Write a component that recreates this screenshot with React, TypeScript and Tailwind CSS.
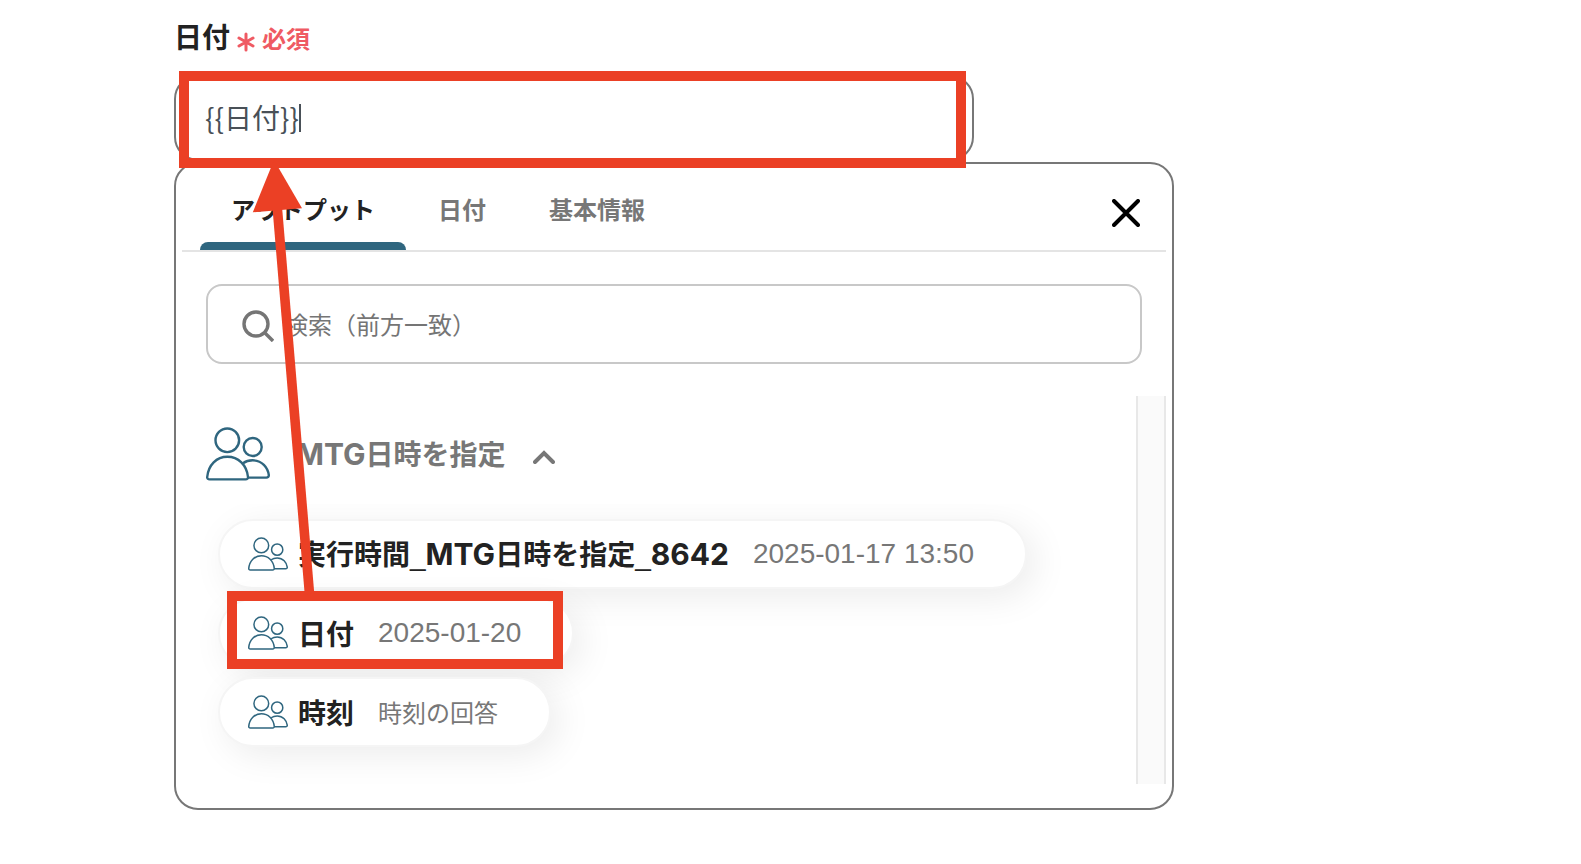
import { useState } from "react";

const TABS = ["アウトプット", "日付", "基本情報"];

const OUTPUTS = [
  {
    id: "run-time",
    label: (
      <>
        実行時間<Underscore />
        <Latin>MTG</Latin>日時を指定<Underscore />
        <Latin>8642</Latin>
      </>
    ),
    value: <Digits>2025-01-17 13:50</Digits>,
  },
  { id: "date", label: "日付", value: <Digits>2025-01-20</Digits> },
  { id: "time", label: "時刻", value: "時刻の回答" },
];

function Latin({ children }: { children: React.ReactNode }) {
  return (
    <span className="font-['Inter','Noto_Sans_CJK_JP',sans-serif] text-[30px] leading-none">
      {children}
    </span>
  );
}

function Underscore() {
  return <span className="font-['Liberation_Sans',sans-serif] font-normal">_</span>;
}

function Digits({ children }: { children: React.ReactNode }) {
  return (
    <span className="font-['Liberation_Sans',sans-serif] text-[28px] leading-none">{children}</span>
  );
}

function PeopleIcon({ className }: { className?: string }) {
  return (
    <svg
      viewBox="0 0 64 54"
      fill="none"
      stroke="#2f667f"
      strokeWidth="2.4"
      strokeLinejoin="round"
      className={className}
      aria-hidden="true"
    >
      <circle cx="21.3" cy="13.3" r="11.8" />
      <circle cx="46.7" cy="20" r="9" />
      <path d="M3.6 52.4C2 52.4 1.1 51.4 1.2 50 2.4 38 10.5 29.8 21.4 29.8S40.8 38 42 50c.1 1.4-.8 2.4-2.4 2.4Z" />
      <path d="M37 36.2C40 34 43.5 33.3 46.7 33.3 56 33.3 61.800 40.5 62.800 48c.1 1.5-.9 2.6-2.4 2.6H42" />
    </svg>
  );
}

function SearchIcon() {
  return (
    <svg viewBox="0 0 32 32" fill="none" stroke="#757575" strokeWidth="3.4" className="mt-[3px] size-8 shrink-0" aria-hidden="true">
      <circle cx="14" cy="14" r="12" />
      <path d="M22.5 22.5 31 31" />
    </svg>
  );
}

function Annotations() {
  return (
    <div className="pointer-events-none absolute inset-0" aria-hidden="true">
      <div className="absolute top-[71px] left-[179px] h-[97px] w-[787px] border-10 border-[#eb4025]" />
      <div className="absolute top-[591px] left-[227px] h-[78px] w-[336px] border-10 border-[#eb4025]" />
      <svg className="absolute top-0 left-0 h-[600px] w-[400px]" viewBox="0 0 400 600">
        <path d="M277.3 208 309.5 594" stroke="#eb4025" strokeWidth="9.6" />
        <path d="M274 160 302 208.3 252.8 212.3Z" fill="#eb4025" />
      </svg>
    </div>
  );
}

export default function App() {
  const [value, setValue] = useState("{{日付}}");
  const [search, setSearch] = useState("");
  const [activeTab, setActiveTab] = useState(0);
  const [open, setOpen] = useState(true);

  return (
    <main className="relative min-h-screen bg-white pt-3.5 pr-8 pl-[174px] font-['Noto_Sans_CJK_JP',sans-serif] text-[#222]">
      <div className="flex h-11 items-center">
        <label htmlFor="date-field" className="text-[28px] leading-none font-bold">
          日付
        </label>
        <svg viewBox="0 0 18 20" className="mt-3 ml-[7px] h-5 w-[18px]" stroke="#ef5a63" strokeWidth="3" strokeLinecap="round" aria-hidden="true">
          <path d="M9 2v16M2 6l14 8M16 6 2 14" />
        </svg>
        <span className="mt-1 ml-[7px] text-2xl leading-none font-bold text-[#ef5a63]">必須</span>
      </div>

      <div className="relative mt-[17px] max-w-[800px]">
        <input
          id="date-field"
          type="text"
          value={value}
          onChange={(e) => setValue(e.target.value)}
          className="block h-[86px] w-full rounded-3xl border-2 border-[#777] px-[29px] pb-0.5 text-[28px] text-[#495057] outline-none"
        />
        <span className="absolute top-[29px] left-[125px] h-7 w-0.5 bg-[#495057]" />
      </div>

      <section className="mt-px max-w-[1000px] rounded-3xl border-2 border-[#777] px-1.5 pb-6">
        <div className="flex h-[88px] border-b-2 border-[#e4e4e4] pr-[26px] pl-[18px]">
          <div role="tablist" className="flex gap-px">
            {TABS.map((tab, i) => (
              <button
                key={tab}
                type="button"
                role="tab"
                aria-selected={activeTab === i}
                onClick={() => setActiveTab(i)}
                className={`flex flex-col items-center text-2xl font-bold ${
                  activeTab === i ? "text-[#222]" : "text-[#777]"
                }`}
              >
                <span className="flex flex-1 items-center px-[31px] pt-3">{tab}</span>
                <span className={`h-2 w-full rounded-t-lg ${activeTab === i ? "bg-[#2f667f]" : ""}`} />
              </button>
            ))}
          </div>
          <button type="button" aria-label="閉じる" className="mt-3 ml-auto">
            <svg viewBox="0 0 28 28" className="size-7" stroke="#000" strokeWidth="4" strokeLinecap="round" aria-hidden="true">
              <path d="m2 2 24 24M26 2 2 26" />
            </svg>
          </button>
        </div>

        <label className="mx-6 mt-8 flex h-20 items-center gap-2.5 rounded-2xl border-2 border-[#c8c8c8] px-[34px]">
          <SearchIcon />
          <input
            type="text"
            aria-label="検索（前方一致）"
            placeholder="検索（前方一致）"
            value={search}
            onChange={(e) => setSearch(e.target.value)}
            className="w-full text-2xl outline-none placeholder:text-[#757575]"
          />
        </label>

        <div className="mt-8 flex">
          <div className="min-w-0 flex-1 pt-[31px]">
            <button
              type="button"
              aria-expanded={open}
              onClick={() => setOpen(!open)}
              className="ml-6 flex h-[54px] items-center text-[28px] font-bold text-[#777]"
            >
              <PeopleIcon className="h-[54px] w-16" />
              <span className="ml-[26px] leading-none">
                <Latin>MTG</Latin>日時を指定
              </span>
              <svg viewBox="0 0 22 14" className={`mt-1.5 ml-[27px] h-3.5 w-[22px] ${open ? "" : "rotate-180"}`} fill="none" stroke="#777" strokeWidth="4" strokeLinecap="round" aria-hidden="true">
                <path d="m2 12 9-9 9 9" />
              </svg>
            </button>

            {open && (
              <ul className="mt-[23px] flex flex-col items-start gap-[9px] overflow-hidden pt-[15px] pb-[37px] pl-9">
                {OUTPUTS.map((item) => (
                  <li key={item.id}>
                    <button
                      type="button"
                      className="flex h-[70px] items-center rounded-full border-2 border-[#f5f5f5] bg-white pr-[51px] pl-7 shadow-[8px_8px_36px_rgba(0,0,0,0.08)]"
                    >
                      <PeopleIcon className="h-[34px] w-10" />
                      <span className="ml-2.5 text-[28px] leading-none font-bold">{item.label}</span>
                      <span className="ml-6 text-2xl leading-none text-[#777]">{item.value}</span>
                    </button>
                  </li>
                ))}
              </ul>
            )}
          </div>
          <div className="w-[30px] border-x-2 border-[#e8e8e8] bg-[#fafafa]" />
        </div>
      </section>

      <Annotations />
    </main>
  );
}
